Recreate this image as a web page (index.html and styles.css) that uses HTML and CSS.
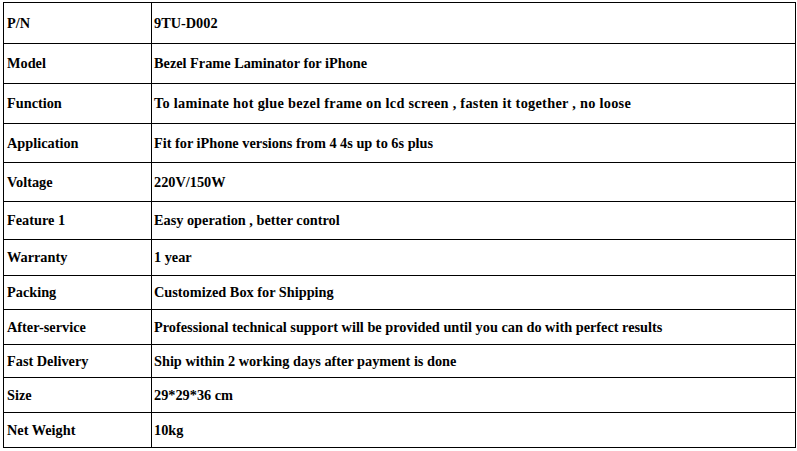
FILE: index.html
```html
<!DOCTYPE html>
<html>
<head>
<meta charset="utf-8">
<link rel="stylesheet" href="styles.css">
</head>
<body>
<div class="spec">
  <div class="cell key">P/N</div><div class="cell val">9TU-D002</div>
  <div class="cell key">Model</div><div class="cell val">Bezel Frame Laminator for iPhone</div>
  <div class="cell key">Function</div><div class="cell val wide">To laminate hot glue bezel frame on lcd screen , fasten it together , no loose</div>
  <div class="cell key">Application</div><div class="cell val">Fit for iPhone versions from 4 4s up to 6s plus</div>
  <div class="cell key">Voltage</div><div class="cell val">220V/150W</div>
  <div class="cell key">Feature 1</div><div class="cell val">Easy operation , better control</div>
  <div class="cell key">Warranty</div><div class="cell val">1 year</div>
  <div class="cell key">Packing</div><div class="cell val">Customized Box for Shipping</div>
  <div class="cell key">After-service</div><div class="cell val">Professional technical support will be provided until you can do with perfect results</div>
  <div class="cell key">Fast Delivery</div><div class="cell val">Ship within 2 working days after payment is done</div>
  <div class="cell key">Size</div><div class="cell val">29*29*36 cm</div>
  <div class="cell key">Net Weight</div><div class="cell val">10kg</div>
</div>
</body>
</html>
```

FILE: styles.css
```css
html, body {
  margin: 0;
  padding: 0;
  background: #fff;
}
body {
  padding: 2px 0 0 3px;
  font-family: "Liberation Serif", "Times New Roman", serif;
  font-weight: bold;
  font-size: 14.3px;
  color: #000;
}
.spec {
  display: grid;
  width: 793px;
  box-sizing: border-box;
  grid-template-columns: 148px 644px;
  grid-template-rows: 41px 40px 40px 39px 39px 38px 36px 34px 35px 33px 35px 35px;
  border-top: 1px solid #000;
  border-left: 1px solid #000;
}
.cell {
  box-sizing: border-box;
  display: flex;
  align-items: center;
  border-right: 1px solid #000;
  border-bottom: 1px solid #000;
  white-space: nowrap;
}
.key {
  padding-left: 3px;
}
.val {
  padding-left: 2px;
}
.wide {
  letter-spacing: 0.28px;
}
```
